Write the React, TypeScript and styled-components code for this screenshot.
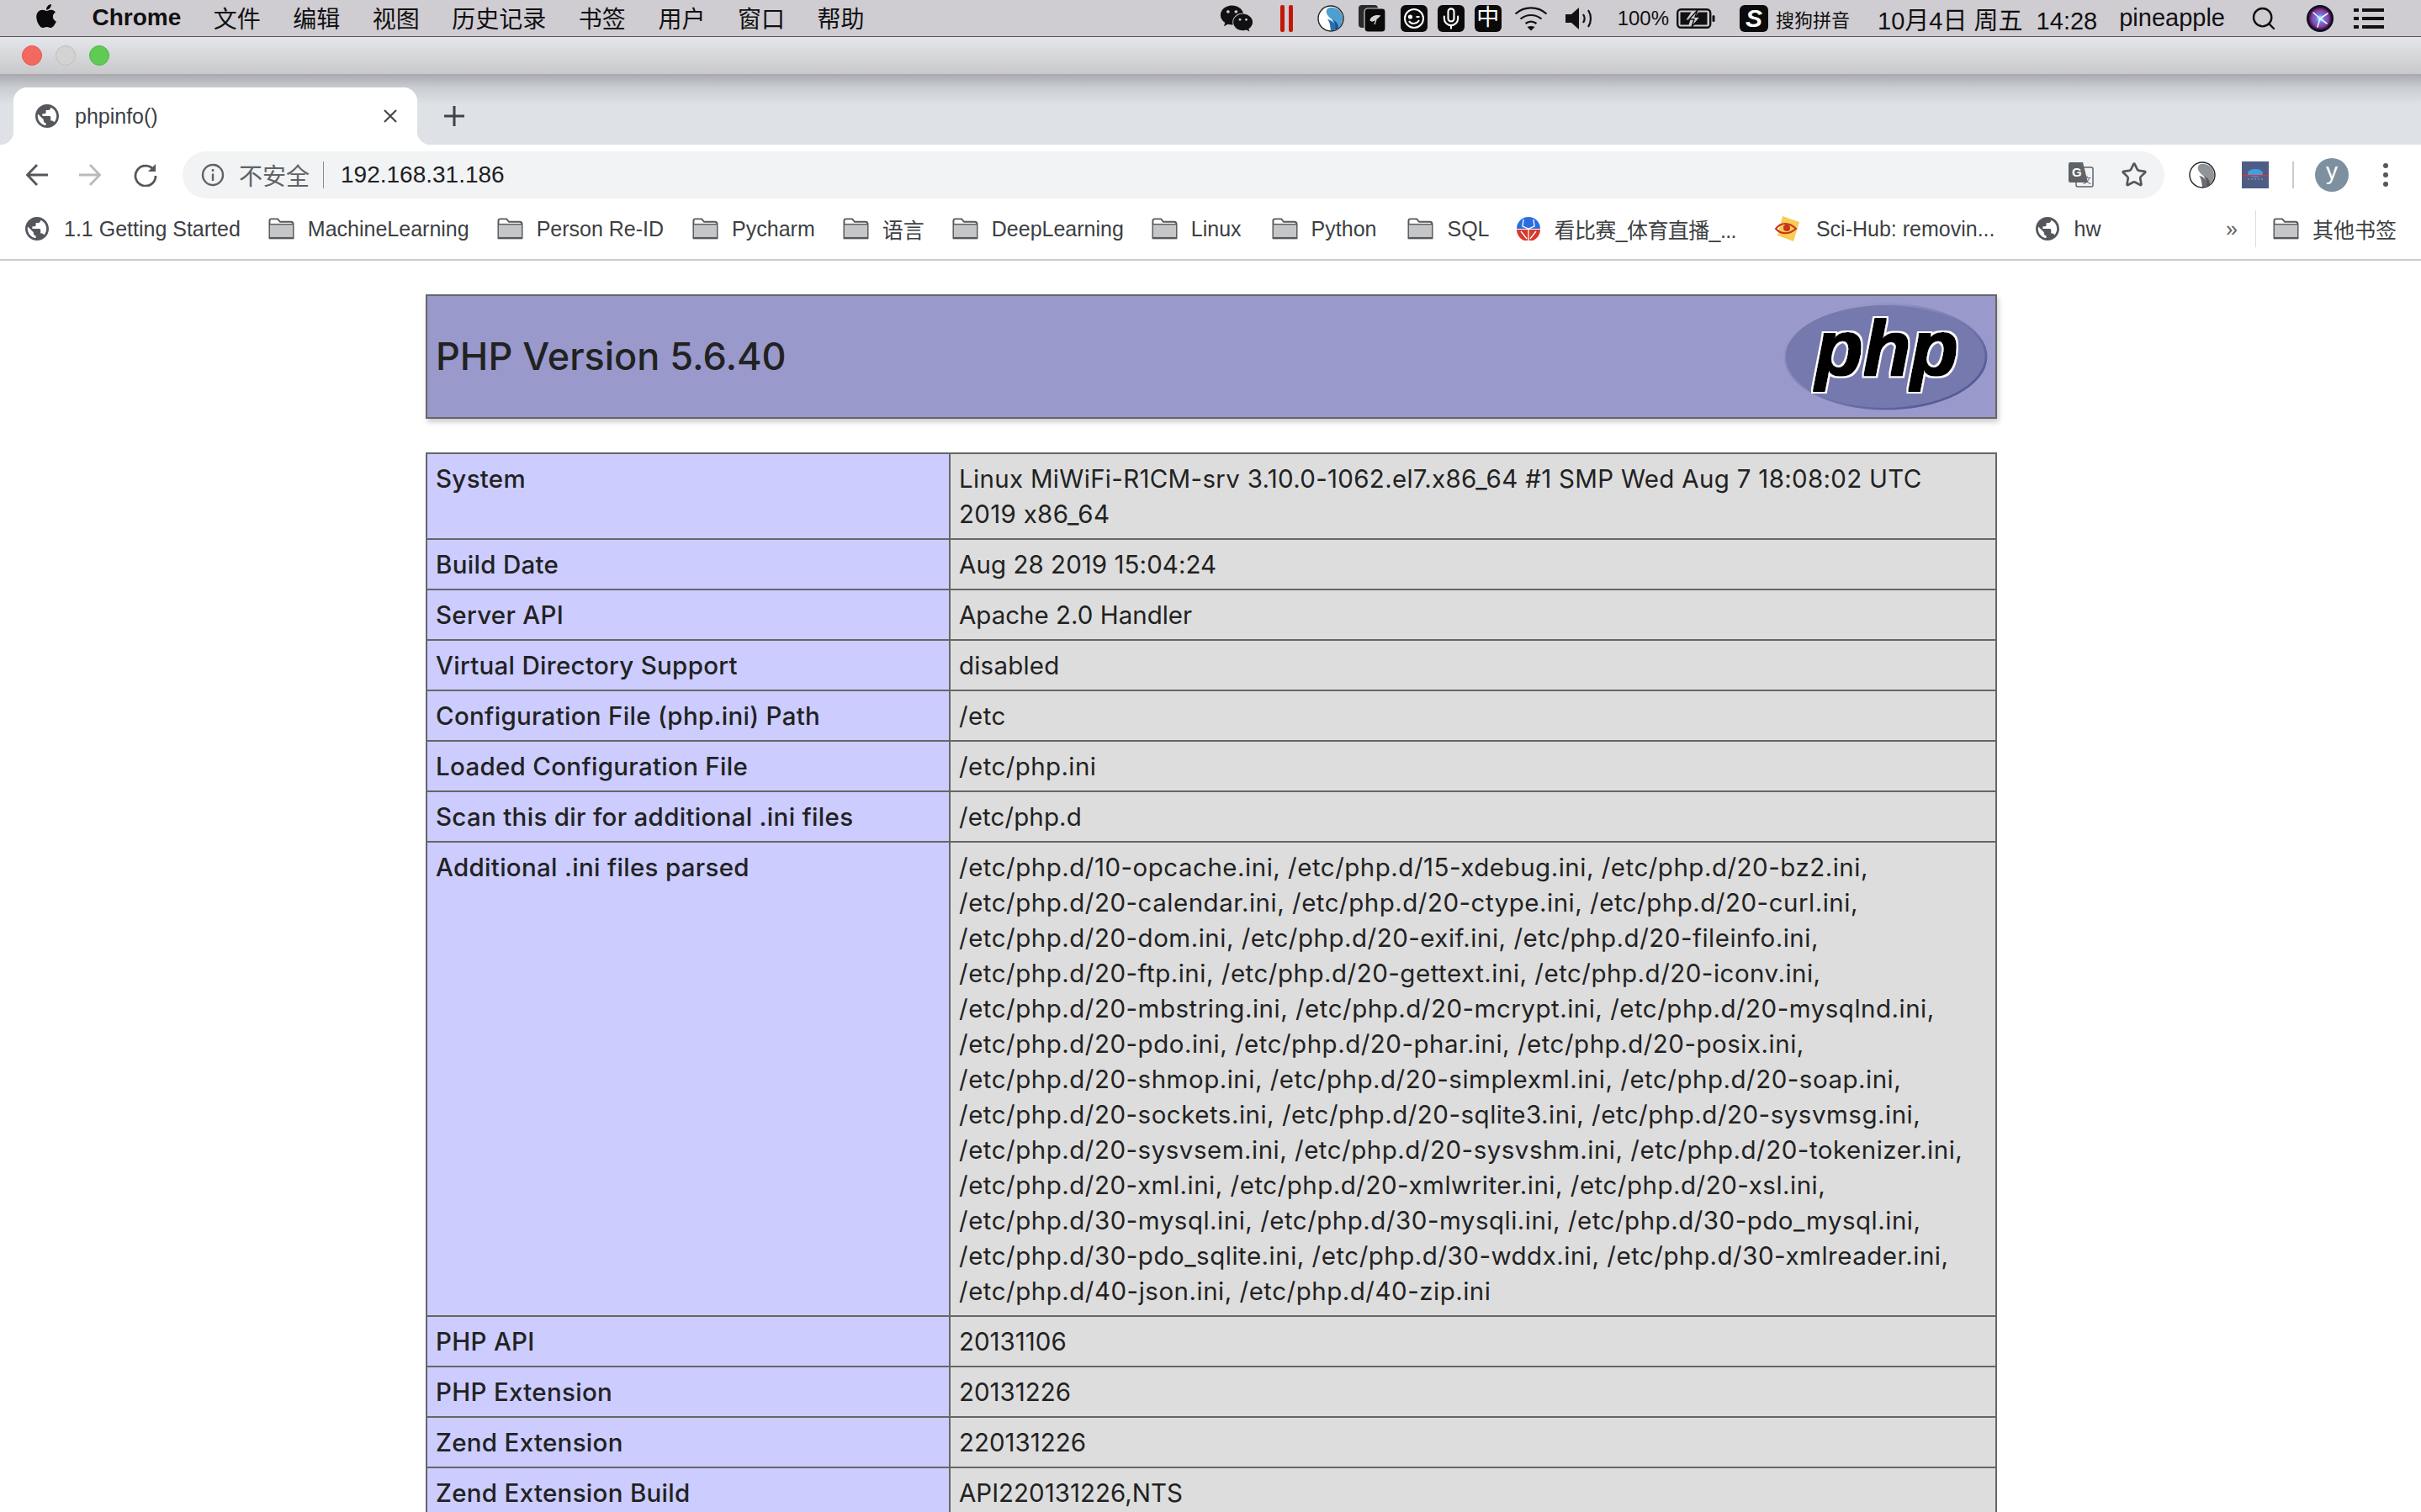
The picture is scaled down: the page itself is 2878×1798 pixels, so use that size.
import React from "react";
import styled, { createGlobalStyle } from "styled-components";
import { FaApple, FaWeixin } from "react-icons/fa";
import { Mic, Search, Star } from "lucide-react";

const GlobalStyle = createGlobalStyle`
  html, body {
    margin: 0;
    padding: 0;
    height: 100%;
    overflow: hidden;
    background: #fff;
  }
  #root {
    height: 100%;
  }
`;

const uiFont = `"Liberation Sans", "Noto Sans CJK SC", sans-serif`;
const pageFont = `Inter, "Noto Sans CJK SC", sans-serif`;

const Screen = styled.div`
  width: 2878px;
  height: 1798px;
  overflow: hidden;
  font-family: ${uiFont};
  color: #222;
`;

/* mac menu bar */
const MenuBar = styled.div`
  height: 43px;
  box-sizing: content-box;
  border-bottom: 1px solid #57555a;
  background: #cfccd2;
  display: flex;
  align-items: center;
  padding: 0 44px 0 39px;
  color: #111;
  font-size: 28px;
`;

const MenuItem = styled.span<{ $bold?: boolean }>`
  margin: 0 0 2px 38.5px;
  font-weight: ${(p) => (p.$bold ? 700 : 400)};
  white-space: nowrap;
`;

const StatusArea = styled.div`
  margin-left: auto;
  display: flex;
  align-items: center;
`;

const StatusItem = styled.div<{ $ml?: number; $size?: number }>`
  display: flex;
  align-items: center;
  margin-left: ${(p) => p.$ml ?? 0}px;
  font-size: ${(p) => p.$size ?? 28}px;
  white-space: nowrap;
`;

const BlackBadge = styled.div<{ $w?: number }>`
  width: ${(p) => p.$w ?? 32}px;
  height: 32px;
  border-radius: 6px;
  background: #0a0a0a;
  color: #fff;
  display: flex;
  align-items: center;
  justify-content: center;
  font-size: 27px;
  line-height: 1;
`;

const SougouLetter = styled.span`
  font-weight: 700;
  font-style: italic;
  font-size: 30px;
`;

/* window title strip */
const TitleStrip = styled.div`
  height: 44px;
  box-sizing: border-box;
  background: linear-gradient(#e4e6e9, #c9c9cb);
  display: flex;
  align-items: center;
  gap: 16px;
  padding-left: 26px;
`;

const TrafficLight = styled.span<{ $color: string; $edge: string }>`
  width: 24px;
  height: 24px;
  box-sizing: border-box;
  border-radius: 50%;
  background: ${(p) => p.$color};
  border: 1px solid ${(p) => p.$edge};
`;

const TabStrip = styled.div`
  height: 84px;
  background: linear-gradient(#a8a9ae 0, #c9ccd1 16px, #dee1e6 36px, #dee1e6 100%);
  display: flex;
  align-items: flex-end;
  padding-left: 16px;
`;

const Tab = styled.div`
  position: relative;
  width: 480px;
  height: 68px;
  box-sizing: border-box;
  background: #fff;
  border-radius: 16px 16px 0 0;
  display: flex;
  align-items: center;
  padding: 0 24px 0 26px;
  font-size: 25px;
  color: #3c4043;

  &::before,
  &::after {
    content: "";
    position: absolute;
    bottom: 0;
    width: 16px;
    height: 16px;
  }
  &::before {
    left: -16px;
    background: radial-gradient(circle at 0 0, transparent 16px, #fff 16.5px);
  }
  &::after {
    right: -16px;
    background: radial-gradient(circle at 100% 0, transparent 16px, #fff 16.5px);
  }
`;

const TabTitle = styled.span`
  margin-left: 19px;
  flex: 1;
`;

const NewTab = styled.div`
  margin: 0 0 22px 32px;
  display: flex;
`;

const Toolbar = styled.div`
  height: 64px;
  box-sizing: border-box;
  padding-top: 8px;
  display: flex;
  align-items: center;
  background: #fff;
`;

const NavIcon = styled.div<{ $ml: number }>`
  margin-left: ${(p) => p.$ml}px;
  display: flex;
`;

const Omnibox = styled.div`
  flex: 1;
  height: 56px;
  margin-left: 30px;
  border-radius: 28px;
  background: #f1f3f4;
  display: flex;
  align-items: center;
  padding: 0 20px 0 22px;
`;

const Insecure = styled.span`
  margin-left: 17px;
  font-size: 28px;
  color: #5f6368;
  white-space: nowrap;
`;

const OmniDivider = styled.span`
  width: 1px;
  height: 32px;
  margin: 0 20px 0 16px;
  background: #8a8d91;
`;

const Url = styled.span`
  flex: 1;
  font-size: 28px;
  color: #202124;
`;

const Extensions = styled.div`
  width: 305px;
  box-sizing: border-box;
  padding-left: 29px;
  display: flex;
  align-items: center;
`;

const ExtensionSlot = styled.div<{ $ml?: number }>`
  margin-left: ${(p) => p.$ml ?? 0}px;
  display: flex;
  align-items: center;
`;

const ToolbarDivider = styled.span`
  width: 2px;
  height: 32px;
  margin-left: 28px;
  background: #ccc;
`;

const Avatar = styled.div`
  width: 40px;
  height: 40px;
  margin-left: 25px;
  border-radius: 50%;
  background: #7d909f;
  color: #fff;
  font-size: 28px;
  line-height: 32px;
  text-align: center;
`;

const BookmarkBar = styled.div`
  height: 72px;
  border-bottom: 2px solid #c9cbce;
  display: flex;
  align-items: center;
  padding: 0 29px 0 30px;
  background: #fff;
`;

const Bookmark = styled.div<{ $gap?: number; $tight?: boolean; $mr?: number }>`
  display: flex;
  align-items: center;
  gap: ${(p) => p.$gap ?? 16}px;
  margin-right: ${(p) => p.$mr ?? 33}px;
  font-size: 25px;
  letter-spacing: ${(p) => (p.$tight ? "-0.6px" : "0")};
  color: #3c4043;
  white-space: nowrap;
`;

const OverflowArea = styled.div`
  margin-left: auto;
  display: flex;
  align-items: center;
  font-size: 25px;
  color: #5f6368;
`;

const BarDivider = styled.span`
  width: 1px;
  height: 44px;
  margin: 0 20px 0 21px;
  background: #ddd;
`;

/* phpinfo page */
const Page = styled.main`
  padding: 40px 0 0 506px;
  font-family: ${pageFont};
`;

const Center = styled.div`
  width: 1868px;
`;

const Header = styled.div`
  height: 148px;
  box-sizing: border-box;
  border: 2px solid #666;
  background: #9999cc;
  box-shadow: 2px 4px 6px #ccc;
  display: flex;
  align-items: center;
  justify-content: space-between;
  padding: 0 9px 0 10px;
`;

const Title = styled.h1`
  margin: 0 0 2px;
  font-size: 45px;
  font-weight: 500;
  color: #222;
`;

const InfoTable = styled.table`
  width: 1868px;
  margin-top: 40px;
  border-collapse: collapse;
  table-layout: fixed;
`;

const Cell = styled.td`
  border: 2px solid #666;
  padding: 8px 10px;
  font-size: 29.5px;
  line-height: 42px;
  vertical-align: baseline;
  color: #222;
`;

const KeyCell = styled(Cell)`
  width: 622px;
  box-sizing: border-box;
  background: #ccccff;
  font-weight: 500;
  letter-spacing: 0.3px;
`;

const ValueCell = styled(Cell)<{ $spacing: number }>`
  padding-right: 18px;
  background: #dddddd;
  letter-spacing: ${(p) => p.$spacing}px;
`;

const Word = styled.span`
  white-space: nowrap;
`;

const rows: [string, string, number][] = [
  ["System", "Linux MiWiFi-R1CM-srv 3.10.0-1062.el7.x86_64 #1 SMP Wed Aug 7 18:08:02 UTC 2019 x86_64", 0.3],
  ["Build Date", "Aug 28 2019 15:04:24", 0.05],
  ["Server API", "Apache 2.0 Handler", 0],
  ["Virtual Directory Support", "disabled", 0.2],
  ["Configuration File (php.ini) Path", "/etc", 0.4],
  ["Loaded Configuration File", "/etc/php.ini", 0.4],
  ["Scan this dir for additional .ini files", "/etc/php.d", 0.1],
  [
    "Additional .ini files parsed",
    "/etc/php.d/10-opcache.ini, /etc/php.d/15-xdebug.ini, /etc/php.d/20-bz2.ini, /etc/php.d/20-calendar.ini, /etc/php.d/20-ctype.ini, /etc/php.d/20-curl.ini, /etc/php.d/20-dom.ini, /etc/php.d/20-exif.ini, /etc/php.d/20-fileinfo.ini, /etc/php.d/20-ftp.ini, /etc/php.d/20-gettext.ini, /etc/php.d/20-iconv.ini, /etc/php.d/20-mbstring.ini, /etc/php.d/20-mcrypt.ini, /etc/php.d/20-mysqlnd.ini, /etc/php.d/20-pdo.ini, /etc/php.d/20-phar.ini, /etc/php.d/20-posix.ini, /etc/php.d/20-shmop.ini, /etc/php.d/20-simplexml.ini, /etc/php.d/20-soap.ini, /etc/php.d/20-sockets.ini, /etc/php.d/20-sqlite3.ini, /etc/php.d/20-sysvmsg.ini, /etc/php.d/20-sysvsem.ini, /etc/php.d/20-sysvshm.ini, /etc/php.d/20-tokenizer.ini, /etc/php.d/20-xml.ini, /etc/php.d/20-xmlwriter.ini, /etc/php.d/20-xsl.ini, /etc/php.d/30-mysql.ini, /etc/php.d/30-mysqli.ini, /etc/php.d/30-pdo_mysql.ini, /etc/php.d/30-pdo_sqlite.ini, /etc/php.d/30-wddx.ini, /etc/php.d/30-xmlreader.ini, /etc/php.d/40-json.ini, /etc/php.d/40-zip.ini",
    0.5,
  ],
  ["PHP API", "20131106", 0],
  ["PHP Extension", "20131226", 0],
  ["Zend Extension", "220131226", 0],
  ["Zend Extension Build", "API220131226,NTS", 0],
];

const menus = ["文件", "编辑", "视图", "历史记录", "书签", "用户", "窗口", "帮助"];

const Globe = ({ size = 28 }: { size?: number }) => (
  <svg width={size} height={size} viewBox="2 2 20 20">
    <path
      fill="#54585d"
      d="M12 2C6.48 2 2 6.48 2 12s4.48 10 10 10 10-4.48 10-10S17.52 2 12 2zm-1 17.93c-3.95-.49-7-3.85-7-7.93 0-.62.08-1.21.21-1.79L9 15v1c0 1.1.9 2 2 2v1.93zm6.9-2.54c-.26-.81-1-1.39-1.9-1.39h-1v-3c0-.55-.45-1-1-1H8v-2h2c.55 0 1-.45 1-1V7h2c1.1 0 2-.9 2-2v-.41c2.93 1.19 5 4.06 5 7.41 0 2.08-.8 3.97-2.1 5.39z"
    />
  </svg>
);

const Folder = () => (
  <svg width="31" height="26" viewBox="0 0 32 26">
    <path d="M1.500 24.500V3a2 2 0 0 1 2-2h8l3 3.500h13a3 3 0 0 1 3 3v17z" fill="#fff" stroke="#55595e" strokeWidth="2" />
    <rect x="2" y="8" width="28" height="16" fill="#c6c6c6" />
    <path d="M1.500 7.500h29" stroke="#55595e" strokeWidth="1.500" />
    <path d="M1 24.500h30" stroke="#55595e" strokeWidth="2.500" />
  </svg>
);

const WaveBall = ({ light, mid, dark, size = 32 }: { light: string; mid: string; dark: string; size?: number }) => (
  <svg width={size} height={size} viewBox="0 0 32 32">
    <circle cx="16" cy="16" r="15" fill="#fff" stroke="#222" strokeWidth="1.400" />
    <path d="M13 3.500C20 1 30 6 30 16c0 7-4 12-9 14-1-7-1-11-5-14-4-3-8-9-3-12.500z" fill={light} />
    <path d="M16 30c-1-6-1-10-4-13 6 1 10 5 10 12-2 1-4 1-6 1z" fill={mid} />
    <path d="M21 29.500c1-5 0-9-3-12 5 2 7 5 7 10-1 1-2 1.500-4 2z" fill={dark} />
  </svg>
);

const PhpLogo = () => (
  <svg width="243" height="128" viewBox="0 0 243 128">
    <defs>
      <linearGradient id="rim" x1="0" y1="0" x2="1" y2="1">
        <stop offset="0" stopColor="#a9acd0" />
        <stop offset="0.5" stopColor="#777bb0" />
        <stop offset="1" stopColor="#444a8e" />
      </linearGradient>
      <filter id="heavy" x="-10%" y="-10%" width="120%" height="120%">
        <feMorphology in="SourceAlpha" operator="dilate" radius="1.200" result="fat" />
        <feMorphology in="SourceAlpha" operator="dilate" radius="2.700" result="halo" />
        <feFlood floodColor="#fff" />
        <feComposite in2="halo" operator="in" result="white" />
        <feMerge>
          <feMergeNode in="white" />
          <feMergeNode in="fat" />
        </feMerge>
      </filter>
    </defs>
    <ellipse cx="121.500" cy="64" rx="121" ry="63.500" fill="url(#rim)" />
    <ellipse cx="121" cy="64" rx="118.500" ry="61" fill="#7579ae" />
    <text
      x="38"
      y="86"
      fontFamily="'Liberation Sans', sans-serif"
      fontSize="93"
      fontWeight="700"
      fontStyle="italic"
      textLength="170"
      lengthAdjust="spacingAndGlyphs"
      fill="#000"
      filter="url(#heavy)"
    >
      php
    </text>
  </svg>
);

const Siri = () => (
  <svg width="32" height="32" viewBox="0 0 32 32">
    <defs>
      <radialGradient id="siri">
        <stop offset="0" stopColor="#dbeeff" />
        <stop offset="0.35" stopColor="#5f7fd8" />
        <stop offset="0.7" stopColor="#9a3aa8" />
        <stop offset="1" stopColor="#14122e" />
      </radialGradient>
    </defs>
    <circle cx="16" cy="16" r="16" fill="#0d0d1c" />
    <circle cx="16" cy="16" r="14" fill="url(#siri)" />
    <path d="M16 16L8 9M16 16l9-6M16 16l-3 10M16 16l8 6" stroke="#e8f6ff" strokeWidth="1.600" strokeLinecap="round" />
  </svg>
);

export default function App() {
  return (
    <Screen>
      <GlobalStyle />
      <MenuBar>
        <FaApple size={32} color="#0a0a0a" style={{ marginTop: -5 }} />
        <MenuItem $bold>Chrome</MenuItem>
        {menus.map((m) => (
          <MenuItem key={m}>{m}</MenuItem>
        ))}
        <StatusArea>
          <FaWeixin size={40} color="#111" />
          <StatusItem $ml={32}>
            <svg width="15" height="32" viewBox="0 0 15 32">
              <rect x="0" y="0" width="5" height="32" rx="2" fill="#c21807" />
              <rect x="10" y="0" width="5" height="32" rx="2" fill="#c21807" />
            </svg>
          </StatusItem>
          <StatusItem $ml={29}>
            <WaveBall light="#4f9ed0" mid="#2c6fb0" dark="#1c4f96" />
          </StatusItem>
          <StatusItem $ml={17}>
            <svg width="32" height="32" viewBox="0 0 32 32">
              <rect x="0" y="0" width="23" height="27" rx="4" fill="#2a2a2a" />
              <rect x="7" y="4" width="25" height="28" rx="4" fill="#0a0a0a" stroke="#cfccd2" strokeWidth="1.200" />
              <path d="M14 18c1-4 6-6 11-5-2 2-5 5-9 6zM21 17l-2 6" stroke="#ddd" strokeWidth="1.300" fill="#ccc" />
            </svg>
          </StatusItem>
          <StatusItem $ml={18}>
            <BlackBadge>
              <svg width="26" height="26" viewBox="0 0 26 26" fill="none" stroke="#fff" strokeWidth="2">
                <circle cx="13" cy="13" r="11" />
                <circle cx="8.500" cy="11" r="1.600" fill="#fff" />
                <path d="M15.500 11h4M7 16c2 4 9 4 12-1" />
              </svg>
            </BlackBadge>
          </StatusItem>
          <StatusItem $ml={12}>
            <BlackBadge>
              <Mic size={28} strokeWidth={1.800} />
            </BlackBadge>
          </StatusItem>
          <StatusItem $ml={12}>
            <BlackBadge>中</BlackBadge>
          </StatusItem>
          <StatusItem $ml={15}>
            <svg width="40" height="30" viewBox="0 0 40 30" fill="none" stroke="#111" strokeWidth="2.200">
              <path d="M1.500 9.500C12 0 28 0 38.500 9.500" />
              <path d="M7.500 15.500c7.500-6 17.500-6 25 0" />
              <path d="M13.500 21c4-3 9-3 13 0" />
              <path d="M15.500 25l4.500 4.500 4.500-4.500c-3-1.500-6-1.500-9 0z" fill="#111" stroke="none" />
            </svg>
          </StatusItem>
          <StatusItem $ml={21}>
            <svg width="32" height="28" viewBox="0 0 32 28" fill="none">
              <path d="M0 9h7l9-8v26l-9-8H0z" fill="#111" />
              <path d="M21 9c2 3 2 7 0 10M27 4c4 6 4 14 0 20" stroke="#111" strokeWidth="2.200" />
            </svg>
          </StatusItem>
          <StatusItem $ml={30} $size={24}>
            100%
          </StatusItem>
          <StatusItem $ml={9}>
            <svg width="46" height="24" viewBox="0 0 46 24" fill="none">
              <rect x="1.200" y="1.200" width="39" height="21.600" rx="4" stroke="#111" strokeWidth="2.400" />
              <path d="M4.500 4.500h13l-6 9h5l-2 6H4.500zM26 4.500h10.500v15H20l7-9h-5z" fill="#111" />
              <path d="M25 2L15 13h6l-3 9 11-12h-7z" fill="none" stroke="#111" strokeWidth="1.400" />
              <rect x="42.500" y="8" width="3" height="8" rx="1.500" fill="#111" />
            </svg>
          </StatusItem>
          <StatusItem $ml={29}>
            <BlackBadge $w={34}>
              <SougouLetter>S</SougouLetter>
            </BlackBadge>
          </StatusItem>
          <StatusItem $ml={9} $size={22}>
            搜狗拼音
          </StatusItem>
          <StatusItem $ml={33} $size={29}>
            10月4日 周五&nbsp;&nbsp;14:28
          </StatusItem>
          <StatusItem $ml={26} $size={29}>
            pineapple
          </StatusItem>
          <StatusItem $ml={30}>
            <Search size={32} strokeWidth={1.800} color="#111" />
          </StatusItem>
          <StatusItem $ml={35}>
            <Siri />
          </StatusItem>
          <StatusItem $ml={24}>
            <svg width="36" height="28" viewBox="0 0 36 28" fill="#111">
              <rect x="0" y="2" width="6" height="4" />
              <rect x="10" y="2" width="26" height="4" />
              <rect x="0" y="12" width="6" height="4" />
              <rect x="10" y="12" width="26" height="4" />
              <rect x="0" y="22" width="6" height="4" />
              <rect x="10" y="22" width="26" height="4" />
            </svg>
          </StatusItem>
        </StatusArea>
      </MenuBar>

      <TitleStrip>
        <TrafficLight $color="#f4695f" $edge="#df5a50" />
        <TrafficLight $color="#d3d3d3" $edge="#bdbdbd" />
        <TrafficLight $color="#5fcb55" $edge="#50b548" />
      </TitleStrip>

      <TabStrip>
        <Tab>
          <Globe />
          <TabTitle>phpinfo()</TabTitle>
          <svg width="16" height="16" viewBox="0 0 16 16" stroke="#44484d" strokeWidth="2.200">
            <path d="M1 1l14 14M15 1L1 15" />
          </svg>
        </Tab>
        <NewTab>
          <svg width="24" height="24" viewBox="0 0 24 24" stroke="#3f4347" strokeWidth="3">
            <path d="M12 0v24M0 12h24" />
          </svg>
        </NewTab>
      </TabStrip>

      <Toolbar>
        <NavIcon $ml={31}>
          <svg width="26" height="26" viewBox="0 0 26 26" fill="none" stroke="#54585d" strokeWidth="2.800">
            <path d="M26 13H2M13 1L1.500 13 13 25" />
          </svg>
        </NavIcon>
        <NavIcon $ml={37}>
          <svg width="26" height="26" viewBox="0 0 26 26" fill="none" stroke="#b9babc" strokeWidth="2.800">
            <path d="M0 13h24M13 1l11.500 12L13 25" />
          </svg>
        </NavIcon>
        <NavIcon $ml={39}>
          <svg width="28" height="28" viewBox="0 0 28 28" fill="none" stroke="#54585d" strokeWidth="2.800">
            <path d="M24 8.500A12 12 0 1 0 26 15" />
            <path d="M26 1v9h-9" strokeWidth="0" fill="#54585d" />
          </svg>
        </NavIcon>
        <Omnibox>
          <svg width="28" height="28" viewBox="0 0 28 28" fill="none" stroke="#5f6368" strokeWidth="2.400">
            <circle cx="14" cy="14" r="12" />
            <path d="M14 12.500V21M14 7v3" />
          </svg>
          <Insecure>不安全</Insecure>
          <OmniDivider />
          <Url>192.168.31.186</Url>
          <svg width="30" height="30" viewBox="0 0 30 30">
            <rect x="9" y="6" width="20" height="23" rx="2" fill="#f1f3f4" stroke="#5f6368" strokeWidth="1.500" />
            <path d="M2 0h15l6 24H2a2 2 0 0 1-2-2V2a2 2 0 0 1 2-2z" fill="#5f6368" />
            <text x="4" y="17" fontSize="15" fontWeight="700" fill="#fff" fontFamily="'Liberation Sans', sans-serif">
              G
            </text>
            <text x="17" y="25" fontSize="10" fill="#5f6368" fontFamily="'Noto Sans CJK SC', sans-serif">
              文
            </text>
          </svg>
          <NavIcon $ml={32}>
            <Star size={32} strokeWidth={2} color="#54585d" />
          </NavIcon>
        </Omnibox>
        <Extensions>
          <WaveBall light="#909498" mid="#6a6d71" dark="#55585c" />
          <ExtensionSlot $ml={31}>
            <svg width="32" height="32" viewBox="0 0 32 32">
              <rect width="32" height="32" fill="#4e5d86" />
              <ellipse cx="16" cy="14" rx="9" ry="5" fill="#3f9fe0" />
              <rect y="16" width="32" height="1.600" fill="#d8343c" />
              <path d="M7 21h18" stroke="#76809f" strokeWidth="2" strokeDasharray="2 2" />
            </svg>
          </ExtensionSlot>
          <ToolbarDivider />
          <Avatar>y</Avatar>
          <ExtensionSlot $ml={40}>
            <svg width="8" height="30" viewBox="0 0 8 30" fill="#54585d">
              <circle cx="4" cy="4" r="3" />
              <circle cx="4" cy="15" r="3" />
              <circle cx="4" cy="26" r="3" />
            </svg>
          </ExtensionSlot>
        </Extensions>
      </Toolbar>

      <BookmarkBar>
        <Bookmark $gap={18}>
          <Globe />
          1.1 Getting Started
        </Bookmark>
        <Bookmark><Folder />MachineLearning</Bookmark>
        <Bookmark $mr={34}><Folder />Person Re-ID</Bookmark>
        <Bookmark><Folder />Pycharm</Bookmark>
        <Bookmark><Folder />语言</Bookmark>
        <Bookmark><Folder />DeepLearning</Bookmark>
        <Bookmark $mr={36}><Folder />Linux</Bookmark>
        <Bookmark $mr={37}><Folder />Python</Bookmark>
        <Bookmark $mr={33}><Folder />SQL</Bookmark>
        <Bookmark $gap={16} $tight $mr={44}>
          <svg width="28" height="28" viewBox="0 0 28 28">
            <path d="M0 14a14 14 0 0 1 28 0z" fill="#2a6de0" />
            <path d="M0 15a14 14 0 0 0 28 0z" fill="#d8392d" />
            <path d="M8 3l-1 8 7 3 7-3-1-8M14 15v13M5 17l7 9M23 17l-7 9" stroke="#fff" strokeWidth="1.300" fill="none" />
          </svg>
          看比赛_体育直播_...
        </Bookmark>
        <Bookmark $gap={19} $mr={48}>
          <svg width="32" height="32" viewBox="0 0 32 32">
            <path d="M11 1l20 7-7 23L5 24z" fill="#f7cd56" />
            <path d="M3 16c6-8 16-8 24 0-8 7-18 7-24 0z" fill="none" stroke="#c9341d" strokeWidth="2" />
            <circle cx="16" cy="15" r="4" fill="#c9341d" />
          </svg>
          Sci-Hub: removin...
        </Bookmark>
        <Bookmark $gap={18}>
          <Globe />
          hw
        </Bookmark>
        <OverflowArea>
          »
          <BarDivider />
          <Bookmark $mr={0}>
            <Folder />
            其他书签
          </Bookmark>
        </OverflowArea>
      </BookmarkBar>

      <Page>
        <Center>
          <Header>
            <Title>PHP Version 5.6.40</Title>
            <PhpLogo />
          </Header>
          <InfoTable>
            <tbody>
              {rows.map(([key, value, spacing]) => (
                <tr key={key}>
                  <KeyCell>{key}</KeyCell>
                  <ValueCell $spacing={spacing}>
                    {value.split(" ").map((word, i) => (
                      <React.Fragment key={i}>
                        <Word>{word}</Word>{" "}
                      </React.Fragment>
                    ))}
                  </ValueCell>
                </tr>
              ))}
            </tbody>
          </InfoTable>
        </Center>
      </Page>
    </Screen>
  );
}
